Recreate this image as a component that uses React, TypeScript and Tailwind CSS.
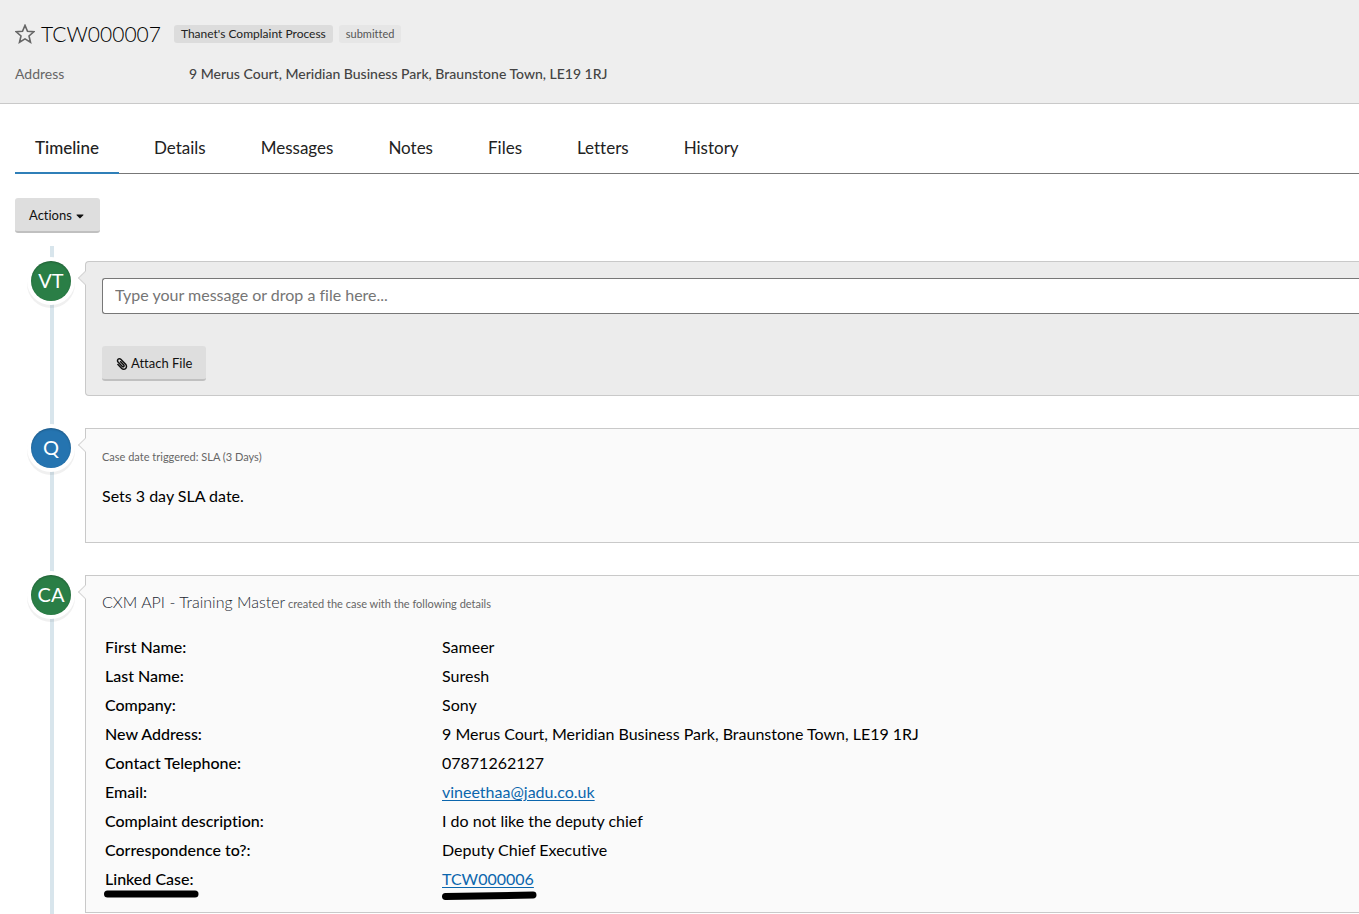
import React from "react";
import { FaPaperclip, FaCaretDown } from "react-icons/fa";

const tabs = ["Timeline", "Details", "Messages", "Notes", "Files", "Letters", "History"];

type Row = { label: string; value: string; href?: string; marked?: boolean };

const rows: Row[] = [
  { label: "First Name:", value: "Sameer" },
  { label: "Last Name:", value: "Suresh" },
  { label: "Company:", value: "Sony" },
  { label: "New Address:", value: "9 Merus Court, Meridian Business Park, Braunstone Town, LE19 1RJ" },
  { label: "Contact Telephone:", value: "07871262127" },
  { label: "Email:", value: "vineethaa@jadu.co.uk", href: "mailto:vineethaa@jadu.co.uk" },
  { label: "Complaint description:", value: "I do not like the deputy chief" },
  { label: "Correspondence to?:", value: "Deputy Chief Executive" },
  { label: "Linked Case:", value: "TCW000006", href: "#TCW000006", marked: true },
];

function Marker({ slanted = false }: { slanted?: boolean }) {
  return (
    <svg className="absolute -left-px top-full" width="96" height="12" viewBox="0 0 96 12" aria-hidden="true">
      <path
        d={slanted ? "M4.5 7.5 C30 7 60 6.8 92 6" : "M3.5 5 H91"}
        stroke="#000"
        strokeWidth="7"
        strokeLinecap="round"
        fill="none"
      />
    </svg>
  );
}

function Entry({
  initials,
  color,
  panel,
  arrow,
  children,
}: {
  initials: string;
  color: string;
  panel: string;
  arrow: string;
  children: React.ReactNode;
}) {
  return (
    <li className="relative flex items-start">
      <div
        className={`ml-4 mr-3.5 flex size-10 shrink-0 items-center justify-center rounded-full pb-0.5 text-xl text-white shadow-[inset_0_1px_2px_rgba(0,0,0,0.25),0_0_0_4px_#fff,0_3px_0_4px_rgba(0,0,0,0.06)] ${color}`}
      >
        {initials}
      </div>
      <div className={`relative min-w-0 grow border border-r-0 border-[#c9c9c9] px-4 ${panel}`}>
        <span
          className={`absolute -left-1.5 top-[11px] size-2.5 rotate-45 border-b border-l border-[#d6d6d6] ${arrow}`}
        />
        {children}
      </div>
    </li>
  );
}

export default function App() {
  return (
    <div className="min-h-screen bg-white font-['Lato',sans-serif] text-black [font-variant-ligatures:none]">
      <header className="border-b border-[#c9c9c9] bg-[#eee] px-[15px] pb-[19px] pt-5">
        <div className="flex h-7 items-center">
          <svg width="20" height="20" viewBox="0 0 20 20" className="shrink-0" aria-hidden="true">
            <path
              d="M10 1.4 L12.5 7.3 L18.8 7.8 L14 12 L15.5 18.3 L10 14.9 L4.5 18.3 L6 12 L1.2 7.8 L7.5 7.3 Z"
              fill="none"
              stroke="#666"
              strokeWidth="1.6"
              strokeLinejoin="miter"
            />
          </svg>
          <h1 className="ml-1.5 text-[21px] leading-7 font-light">TCW000007</h1>
          <span className="ml-[13px] rounded-[3px] bg-[#dcdcdc] px-[7px] text-xs leading-[18px] text-[#222]">
            Thanet's Complaint Process
          </span>
          <span className="ml-1.5 rounded-[3px] bg-[#e6e6e6] px-[7px] text-[11px] leading-[18px] text-[#555]">
            submitted
          </span>
        </div>
        <dl className="mt-4 flex text-sm leading-5">
          <dt className="w-[174px] shrink-0 text-[#666]">Address</dt>
          <dd className="font-medium text-[#444]">9 Merus Court, Meridian Business Park, Braunstone Town, LE19 1RJ</dd>
        </dl>
      </header>

      <main className="pl-[15px] pt-5">
        <nav className="flex border-b border-[#777]">
          {tabs.map((t, i) => (
            <a
              key={t}
              href={`#${t}`}
              className={
                i === 0
                  ? "-mb-px mr-[15px] border-b-2 border-[#2f7fb8] px-5 pb-3 pt-3 text-[17px] leading-6 font-medium text-[#222]"
                  : "mr-[15px] px-5 pb-3 pt-3 text-[17px] leading-6 text-[#222]"
              }
            >
              {t}
            </a>
          ))}
        </nav>

        <button
          type="button"
          className="mt-6 flex h-[35px] items-center gap-0.5 rounded-[3px] border-b-2 border-[#c0c0c0] bg-[#dedede] px-3.5 pt-0.5 text-[13px] text-[#111]"
        >
          Actions
          <FaCaretDown size={12} />
        </button>

        <ol className="relative mt-[13px] flex flex-col gap-8 pb-5 pt-[15px] before:absolute before:bottom-0 before:left-[35px] before:top-0 before:w-1 before:bg-[#d8e5ec]">
          <Entry initials="VT" color="bg-[#2a7e46]" panel="rounded-l bg-[#ececec] pb-3.5 pt-4 pr-0" arrow="bg-[#ececec]">
            <input
              type="text"
              aria-label="Message"
              placeholder="Type your message or drop a file here..."
              className="block h-9 w-full rounded-l-[3px] border border-r-0 border-[#777] bg-white px-3 pb-1 text-base outline-none placeholder:text-[#757575]"
            />
            <button
              type="button"
              className="mt-8 flex h-[35px] items-center gap-[3px] rounded-[3px] border-b-2 border-[#c0c0c0] bg-[#dedede] px-3.5 pt-0.5 text-[13px] text-[#111]"
            >
              <FaPaperclip size={12} className="-scale-x-100" />
              Attach File
            </button>
          </Entry>

          <Entry initials="Q" color="bg-[#2574b0]" panel="bg-[#fafafa] pb-[34px] pt-[18px]" arrow="bg-[#fafafa]">
            <p className="text-[11px] leading-5 text-[#666]">Case date triggered: SLA (3 Days)</p>
            <p className="mt-[17px] text-base leading-6">Sets 3 day SLA date.</p>
          </Entry>

          <Entry initials="CA" color="bg-[#2a7e46]" panel="bg-[#fafafa] pb-[19px] pt-3.5" arrow="bg-[#fafafa]">
            <p className="h-6 text-[11px] leading-6 text-[#666]">
              <span className="text-base font-light text-[#1c2833]">CXM API - Training Master</span> created the case
              with the following details
            </p>
            <table className="mt-[18px] w-full table-fixed text-base leading-[29px]">
              <tbody>
                {rows.map((r) => (
                  <tr key={r.label}>
                    <th scope="row" className="h-[29px] w-[340px] p-0 pl-[3px] text-left font-medium">
                      <span className="relative inline-block leading-5">
                        {r.label}
                        {r.marked && <Marker />}
                      </span>
                    </th>
                    <td className="p-0">
                      <span className="relative inline-block leading-5">
                        {r.href ? (
                          <a href={r.href} className="text-[#0b66ad] underline underline-offset-2">
                            {r.value}
                          </a>
                        ) : (
                          r.value
                        )}
                        {r.marked && <Marker slanted />}
                      </span>
                    </td>
                  </tr>
                ))}
              </tbody>
            </table>
          </Entry>
        </ol>
      </main>
    </div>
  );
}
